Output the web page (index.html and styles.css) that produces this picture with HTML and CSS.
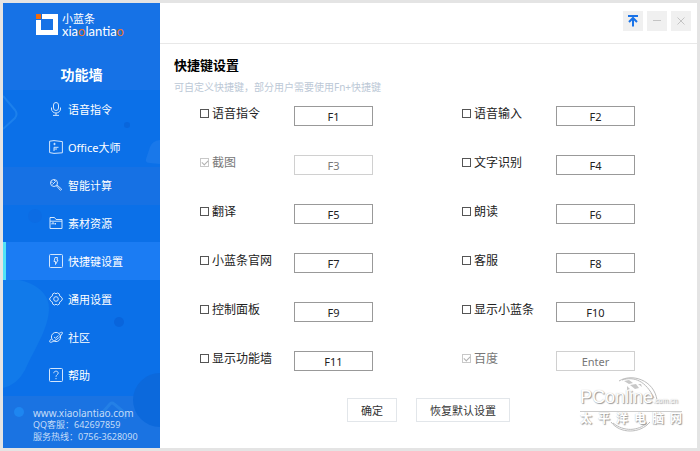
FILE: index.html
```html
<!DOCTYPE html>
<html lang="zh-CN">
<head>
  <meta charset="UTF-8">
  <meta name="viewport" content="width=device-width, initial-scale=1.0">
  <title>小蓝条 - 快捷键设置</title>
  <link rel="stylesheet" href="styles.css">
</head>
<body>
  <div class="window">
    <aside class="sidebar">
      <svg class="sidebar-bg" viewBox="0 0 157 445" preserveAspectRatio="none" aria-hidden="true">
        <rect width="157" height="87" fill="#1672e6"/>
        <rect y="164" width="157" height="38" fill="#1671e4"/>
        <rect y="393" width="157" height="52" fill="#1a73e2"/>
        <path d="M0 93 L12 107 Q15 111 12 115 L0 126" fill="none" stroke="#1c80ec" stroke-width="2"/>
        <path d="M157 137 Q149 138 147 144 L143 156 Q142 160 147 160 L157 161 Z" fill="#1978ea"/>
        <path d="M0 275 C22 275 46 285 46 305 C46 325 32 345 22 367 Q14 382 0 385 Z" fill="#117aea"/>
        <circle cx="124" cy="122" r="3" fill="#0966dc"/>
        <circle cx="32" cy="213" r="7" fill="#0c6ce4"/>
        <circle cx="116" cy="319" r="5" fill="#0965dc"/>
        <path d="M157 370 A27 27 0 0 0 157 424 Z" fill="#0c69dc"/>
        <path d="M100 409 L107 401 Q109 399 111 401 L122 410 L122 416" fill="none" stroke="#2480e6" stroke-width="3"/>
        <circle cx="16" cy="409" r="5" fill="#1e86f0"/>
      </svg>

      <div class="logo">
        <svg class="logo-mark" viewBox="0 0 22 22" aria-hidden="true">
          <path d="M6 0H22V21H0V6H5V16H17V5H6Z" fill="#fff"/>
          <rect width="5" height="5" fill="#f26a0a"/>
        </svg>
        <div class="logo-text">
          <span class="logo-cn">小蓝条</span>
          <span class="logo-en">xia<b>o</b>lantia<b>o</b></span>
        </div>
      </div>

      <h1 class="sidebar-title">功能墙</h1>

      <nav class="menu">
        <a class="menu-item" href="#">
          <svg class="icon" viewBox="0 0 14 14"><rect x="4.5" y="0.5" width="5" height="8" rx="2.5"/><path d="M2.5 5.5V7a4.5 4 0 0 0 9 0V5.5M7 11v2M4 13.4h6"/></svg>
          <span>语音指令</span>
        </a>
        <a class="menu-item" href="#">
          <svg class="icon" viewBox="0 0 14 14"><path d="M.6 1.2 5 .6 13.4 1.6V12.8L5 13.4.6 12.6ZM5 11V7.3H9.5M5.2 9H8"/><circle cx="5.5" cy="4" r=".7" fill="currentColor"/></svg>
          <span>Office大师</span>
        </a>
        <a class="menu-item" href="#">
          <svg class="icon" viewBox="0 0 14 14"><circle cx="5" cy="5" r="3.5"/><path d="M7.2 7.6 11.5 12.4 12.7 11.2 8 7M3.5 6.5 6.5 3.5M2 3.5 3.5 5M5 2 6.5 3.5"/></svg>
          <span>智能计算</span>
        </a>
        <a class="menu-item" href="#">
          <svg class="icon" viewBox="0 0 14 14"><path d="M1 12.5V1.5H5.5L7 3.5H13V12.5ZM1 5.2H13M3 8.5V7H5V8.5M6.5 7V8.5"/></svg>
          <span>素材资源</span>
        </a>
        <a class="menu-item active" href="#">
          <svg class="icon" viewBox="0 0 14 14"><rect x=".5" y=".5" width="13" height="13" rx="1"/><path d="M6 3.5H8.5L8 6H9L6.5 10.5V7.5H5Z"/></svg>
          <span>快捷键设置</span>
        </a>
        <a class="menu-item" href="#">
          <svg class="icon" viewBox="0 0 14 14"><path d="M5.5 1 7 1.8 8.5 1 10.4 2 10.5 3.800 12 4.6 13.5 7 12 9.4 10.5 10.2 10.4 12 8.5 13 7 12.2 5.5 13 3.6 12 3.5 10.2 2 9.4.5 7 2 4.6 3.5 3.8 3.6 2Z"/><circle cx="7" cy="7" r="2.3"/></svg>
          <span>通用设置</span>
        </a>
        <a class="menu-item" href="#">
          <svg class="icon" viewBox="0 0 14 14"><circle cx="7" cy="7" r="4.6"/><path d="M10.3 3.2C13 1.6 14.2 2 13 4 11.5 6.5 8 9.6 4.5 11.3 1 13 -.2 12.4 1.2 10.2L2.6 8.6M5 7l1.500 1.2L9.5 5.5"/></svg>
          <span>社区</span>
        </a>
        <a class="menu-item" href="#">
          <svg class="icon" viewBox="0 0 14 14"><rect x=".5" y=".5" width="13" height="13" rx="1"/><path d="M4.8 5.2C4.8 2.4 9.3 2.5 9.2 5.2 9.1 6.7 7 6.7 7 8.8M7 10v1.2"/></svg>
          <span>帮助</span>
        </a>
      </nav>

      <footer class="contact">
        <div class="site">www.xiaolantiao.com</div>
        <div>QQ客服：642697859</div>
        <div>服务热线：0756-3628090</div>
      </footer>
    </aside>

    <main class="main">
      <header class="titlebar">
        <button class="win-btn pin" type="button" aria-label="置顶">
          <svg viewBox="0 0 12 12"><path d="M1 1H11M6 11.5V3M2 7 6 3 10 7"/></svg>
        </button>
        <button class="win-btn" type="button" aria-label="最小化">
          <svg viewBox="0 0 12 12"><path d="M2 5.5H10"/></svg>
        </button>
        <button class="win-btn" type="button" aria-label="关闭">
          <svg viewBox="0 0 12 12"><path d="M2.5 2.5 9.5 9.5M9.5 2.5 2.5 9.5"/></svg>
        </button>
      </header>

      <form class="settings">
        <h2>快捷键设置</h2>
        <p class="hint">可自定义快捷键，部分用户需要使用Fn+快捷键</p>

        <div class="keys">
          <div class="key-row">
            <label><input type="checkbox">语音指令</label>
            <input class="key" type="text" value="F1" aria-label="语音指令快捷键">
          </div>
          <div class="key-row">
            <label><input type="checkbox">语音输入</label>
            <input class="key" type="text" value="F2" aria-label="语音输入快捷键">
          </div>
          <div class="key-row disabled">
            <label><input type="checkbox" checked disabled>截图</label>
            <input class="key" type="text" value="F3" aria-label="截图快捷键" disabled>
          </div>
          <div class="key-row">
            <label><input type="checkbox">文字识别</label>
            <input class="key" type="text" value="F4" aria-label="文字识别快捷键">
          </div>
          <div class="key-row">
            <label><input type="checkbox">翻译</label>
            <input class="key" type="text" value="F5" aria-label="翻译快捷键">
          </div>
          <div class="key-row">
            <label><input type="checkbox">朗读</label>
            <input class="key" type="text" value="F6" aria-label="朗读快捷键">
          </div>
          <div class="key-row">
            <label><input type="checkbox">小蓝条官网</label>
            <input class="key" type="text" value="F7" aria-label="小蓝条官网快捷键">
          </div>
          <div class="key-row">
            <label><input type="checkbox">客服</label>
            <input class="key" type="text" value="F8" aria-label="客服快捷键">
          </div>
          <div class="key-row">
            <label><input type="checkbox">控制面板</label>
            <input class="key" type="text" value="F9" aria-label="控制面板快捷键">
          </div>
          <div class="key-row">
            <label><input type="checkbox">显示小蓝条</label>
            <input class="key" type="text" value="F10" aria-label="显示小蓝条快捷键">
          </div>
          <div class="key-row">
            <label><input type="checkbox">显示功能墙</label>
            <input class="key" type="text" value="F11" aria-label="显示功能墙快捷键">
          </div>
          <div class="key-row disabled">
            <label><input type="checkbox" checked disabled>百度</label>
            <input class="key" type="text" value="Enter" aria-label="百度快捷键" disabled>
          </div>
        </div>

        <div class="actions">
          <button class="btn" type="submit">确定</button>
          <button class="btn" type="reset">恢复默认设置</button>
        </div>
      </form>

      <!-- watermark -->
      <div class="watermark">
        <svg viewBox="0 0 102 56" aria-hidden="true">
          <path d="M39 5C52-3 74 4 77 24M42 4C54 0 66 5 74 22M31 46C40 58 60 58 70 46M33 47C44 56 58 55 67 47" fill="none" stroke="#bcbcbc"/>
          <path d="M44 5l5-1 4 3-4 1zM50 9l6-1 3 4-4 1zM58 8l3 0 1 3zM47 10l3 3-3 1z" fill="#c8c8c8"/>
        </svg>
        <div class="wm-name">PConline<small>.com.cn</small></div>
        <div class="wm-cn"><span>太</span><span>平</span><span>洋</span><span>电</span><span>脑</span><span>网</span></div>
      </div>
    </main>
  </div>
</body>
</html>
```
FILE: styles.css
```css
* {
  box-sizing: border-box;
}

body {
  margin: 0;
  padding: 3px;
  min-height: 100vh;
  display: flex;
  background: #e4e4e4;
  font-family: "Noto Sans", "Noto Sans CJK SC", sans-serif;
  color: #222;
}

.window {
  flex: 1;
  display: flex;
  background: #fff;
}

/* sidebar */
.sidebar {
  position: relative;
  flex: 0 0 157px;
  display: flex;
  flex-direction: column;
  background: #0b70e8;
  color: #fff;
}

.sidebar-bg {
  position: absolute;
  inset: 0;
  width: 100%;
  height: 100%;
}

.logo,
.sidebar-title,
.menu,
.contact {
  position: relative;
}

.logo {
  display: flex;
  gap: 4px;
  padding: 10px 0 0 33px;
}

.logo-mark {
  width: 22px;
  height: 22px;
  margin-top: 1px;
}

.logo-text {
  display: flex;
  flex-direction: column;
}

.logo-cn {
  font-size: 11px;
  line-height: 12px;
}

.logo-en {
  font-family: Lato, sans-serif;
  font-size: 13px;
  line-height: 13px;
}

.logo-en b {
  font-weight: normal;
  color: #e8752a;
}

.sidebar-title {
  margin: 27px 0 5px;
  font-size: 14px;
  line-height: 20px;
  font-weight: bold;
  text-align: center;
}

.menu {
  display: flex;
  flex-direction: column;
}

.menu-item {
  display: flex;
  align-items: center;
  gap: 5px;
  height: 38px;
  padding-left: 43px;
  border-left: 3px solid transparent;
  color: #fff;
  font-size: 11px;
  text-decoration: none;
}

.menu-item.active {
  background: #1b7cf3;
  border-left-color: #52e4f6;
}

.icon {
  width: 14px;
  height: 14px;
  fill: none;
  stroke: #d3e6fc;
  stroke-width: 1;
}

.contact {
  margin-top: auto;
  padding: 0 0 5px 30px;
  font-size: 9px;
  line-height: 12px;
  color: #c4dcf8;
}

.site {
  font-size: 10px;
}

/* main area */
.main {
  position: relative;
  flex: 1;
}

.titlebar {
  display: flex;
  justify-content: flex-end;
  gap: 4px;
  padding: 8px 6px 12px;
  border-bottom: 1px solid #e8e8e8;
}

.win-btn {
  width: 20px;
  height: 20px;
  padding: 4px;
  border: 0;
  background: #f0f0f0;
}

.win-btn svg {
  display: block;
  width: 12px;
  height: 12px;
  fill: none;
  stroke: #c4c4c4;
  stroke-width: 1;
}

.win-btn.pin svg {
  stroke: #1a73e8;
  stroke-width: 2;
}

.settings {
  padding: 11px 14px 0;
}

.settings h2 {
  margin: 0;
  font-size: 13px;
  line-height: 20px;
  color: #000;
}

.hint {
  margin: 4px 0 11px;
  font-size: 10px;
  line-height: 16px;
  color: #bcc8d6;
}

.keys {
  display: grid;
  grid-template-columns: auto auto;
  justify-content: space-between;
  row-gap: 29px;
  padding: 0 48px 0 26px;
}

.key-row {
  display: flex;
  align-items: center;
}

.key-row label {
  display: flex;
  align-items: center;
  gap: 3px;
  width: 94px;
  padding-bottom: 5px;
  font-size: 12px;
  line-height: 15px;
}

.key-row input[type="checkbox"] {
  appearance: none;
  width: 9px;
  height: 9px;
  margin: 0;
  border: 1px solid #555;
  background: #fff;
}

.key-row input[type="checkbox"]:checked {
  border-color: #c8c8c8;
}

.key-row input[type="checkbox"]:checked::after {
  content: "";
  display: block;
  width: 5px;
  height: 3px;
  margin: 1px;
  border: solid #b0b0b0;
  border-width: 0 0 1px 1px;
  transform: rotate(-45deg);
}

.key {
  width: 79px;
  height: 20px;
  padding: 0;
  border: 1px solid #999;
  border-radius: 0;
  background: #fff;
  color: #222;
  font-family: inherit;
  font-size: 11px;
  text-align: center;
}

.key-row.disabled label,
.key-row.disabled .key {
  color: #777;
}

.key-row.disabled .key {
  border-color: #d0d0d0;
}

.actions {
  display: flex;
  justify-content: center;
  gap: 19px;
  padding-top: 27px;
}

.btn {
  height: 24px;
  padding: 0 13px;
  border: 1px solid #e2e6ea;
  background: #fff;
  color: #333;
  font-family: inherit;
  font-size: 11px;
}

/* watermark */
.watermark {
  position: absolute;
  right: 15px;
  bottom: 16px;
  width: 102px;
  height: 56px;
  padding-top: 11px;
  color: #fff;
  text-shadow: 1px 1px 1px #999, 0 0 1px #bbb;
  pointer-events: none;
}

.watermark svg {
  position: absolute;
  inset: 0;
}

.wm-name {
  position: relative;
  font-family: "Liberation Sans", sans-serif;
  font-size: 18px;
  line-height: 20px;
  white-space: nowrap;
}

.wm-name small {
  font-size: 7px;
}

.wm-cn {
  position: relative;
  display: flex;
  justify-content: space-between;
  border-top: 1px solid #ccc;
  font-size: 12px;
  line-height: 13px;
  font-weight: bold;
}
```
